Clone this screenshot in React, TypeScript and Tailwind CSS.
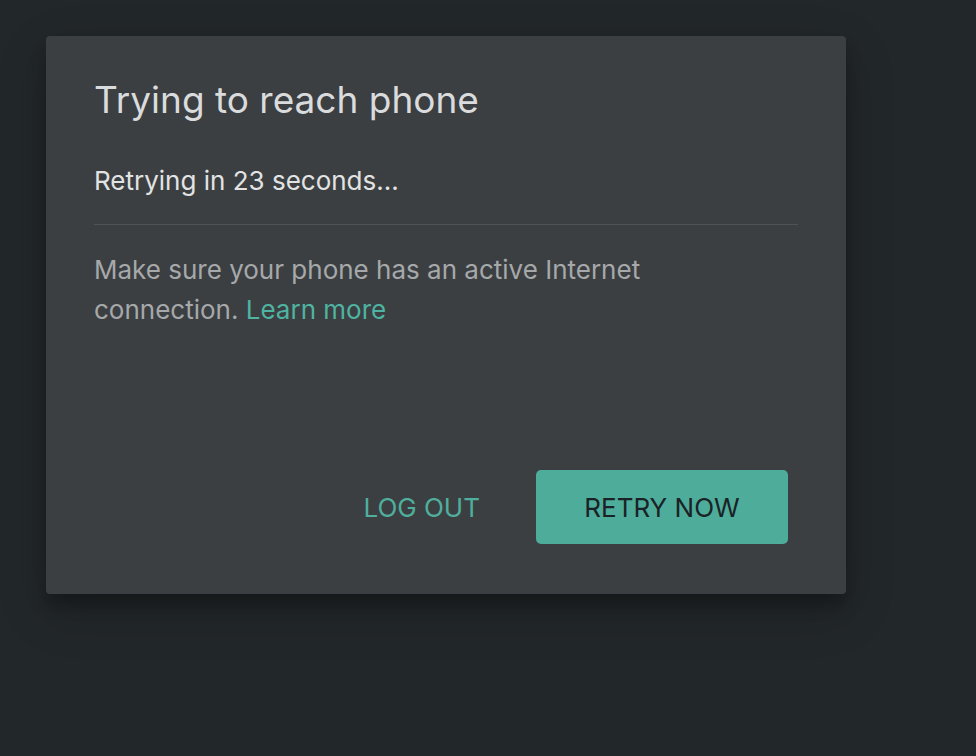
export default function App() {
  return (
    <div
      className="min-h-[756px] w-full bg-[#22272a] pt-[36px] pl-[46px]"
      style={{ fontFamily: 'Inter, "Noto Sans", sans-serif' }}
    >
      <div className="flex h-[558px] w-[800px] flex-col rounded-[4px] bg-[#3b3f42] px-[48px] pt-[42px] pb-[50px] shadow-[0_17px_50px_0_rgba(0,0,0,0.19),0_12px_15px_0_rgba(0,0,0,0.24)]">
        <h1 className="text-[37px] leading-[44px] text-[#dadbdc]">Trying to reach phone</h1>
        <p className="mt-[43px] text-[26px] leading-[32px] text-[#e2e3e3]">Retrying in 23 seconds...</p>
        <div className="mt-[27px] h-px w-full bg-[#4f5356]" />
        <p className="mt-[25px] w-[580px] text-[26px] leading-[40px] text-[#a6a8aa]">
          Make sure your phone has an active Internet connection.{' '}
          <a className="text-[#4fb3a1]">Learn more</a>
        </p>
        <div className="mt-auto flex items-center justify-end gap-[56px] pr-[10px]">
          <button className="text-[26px] text-[#4fae9c]">LOG OUT</button>
          <button className="h-[74px] w-[252px] rounded-[5px] bg-[#4eac9b] text-[26px] text-[#1b2225]">
            RETRY NOW
          </button>
        </div>
      </div>
    </div>
  );
}
